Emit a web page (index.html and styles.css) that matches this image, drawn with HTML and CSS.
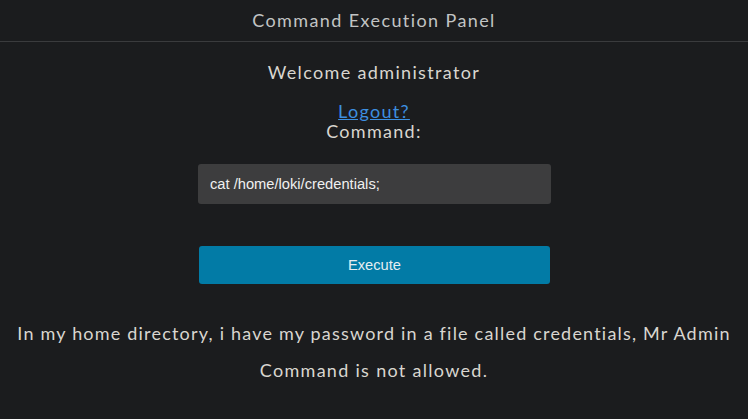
FILE: index.html
```html
<!DOCTYPE html>
<html>
<head>
<meta charset="utf-8">
<title>Command Execution Panel</title>
<link rel="stylesheet" href="styles.css">
</head>
<body>
<header class="topbar"><span class="topbar-title">Command Execution Panel</span></header>
<main class="panel">
  <div class="welcome">Welcome administrator</div>
  <a class="logout" href="#">Logout?</a>
  <div class="label">Command:</div>
  <form class="cmd-form">
    <input class="cmd-input" type="text" value="cat /home/loki/credentials;">
    <button class="cmd-btn" type="button">Execute</button>
  </form>
  <p class="msg msg-first">In my home directory, i have my password in a file called credentials, Mr Admin</p>
  <p class="msg msg-second">Command is not allowed.</p>
</main>
</body>
</html>
```
FILE: styles.css
```css
html, body {
  margin: 0;
  padding: 0;
  background: #1b1c1e;
  color: #d9d6d0;
  font-family: "Lato", "Open Sans", sans-serif;
}
.topbar {
  height: 41px;
  border-bottom: 1px solid #3a3b3d;
  display: flex;
  align-items: center;
  justify-content: center;
}
.topbar-title {
  font-size: 18px;
  color: #c2c4c4;
  letter-spacing: 1.4px;
  margin-top: -2px;
}
.panel {
  display: flex;
  flex-direction: column;
  align-items: center;
  text-align: center;
}
.welcome {
  margin-top: 20px;
  font-size: 18px;
  line-height: 20px;
  letter-spacing: 1.35px;
}
.logout {
  margin-top: 19px;
  font-size: 18px;
  line-height: 20px;
  color: #3d8fe0;
  text-decoration: underline;
  letter-spacing: 1.3px;
}
.label {
  font-size: 18px;
  line-height: 20px;
  letter-spacing: 1.3px;
}
.cmd-form {
  display: flex;
  flex-direction: column;
  align-items: center;
  margin-top: 23px;
}
.cmd-input {
  box-sizing: border-box;
  width: 353px;
  height: 40px;
  margin-left: 1px;
  background: #3d3d3e;
  border: none;
  border-radius: 3px;
  padding: 0 12px;
  color: #f0f0f0;
  font-family: "Liberation Sans", Arial, sans-serif;
  font-size: 14.7px;
  outline: none;
}
.cmd-btn {
  margin-top: 42px;
  width: 351px;
  height: 38px;
  margin-left: 1px;
  background: #027ba6;
  border: none;
  border-radius: 3px;
  color: #e6eef2;
  font-family: "Liberation Sans", Arial, sans-serif;
  font-size: 14.7px;
}
.msg {
  margin: 0;
  font-size: 18px;
  line-height: 37px;
}
.msg-first {
  margin-top: 31px;
  letter-spacing: 1.2px;
}
.msg-second {
  letter-spacing: 1.3px;
}
```
